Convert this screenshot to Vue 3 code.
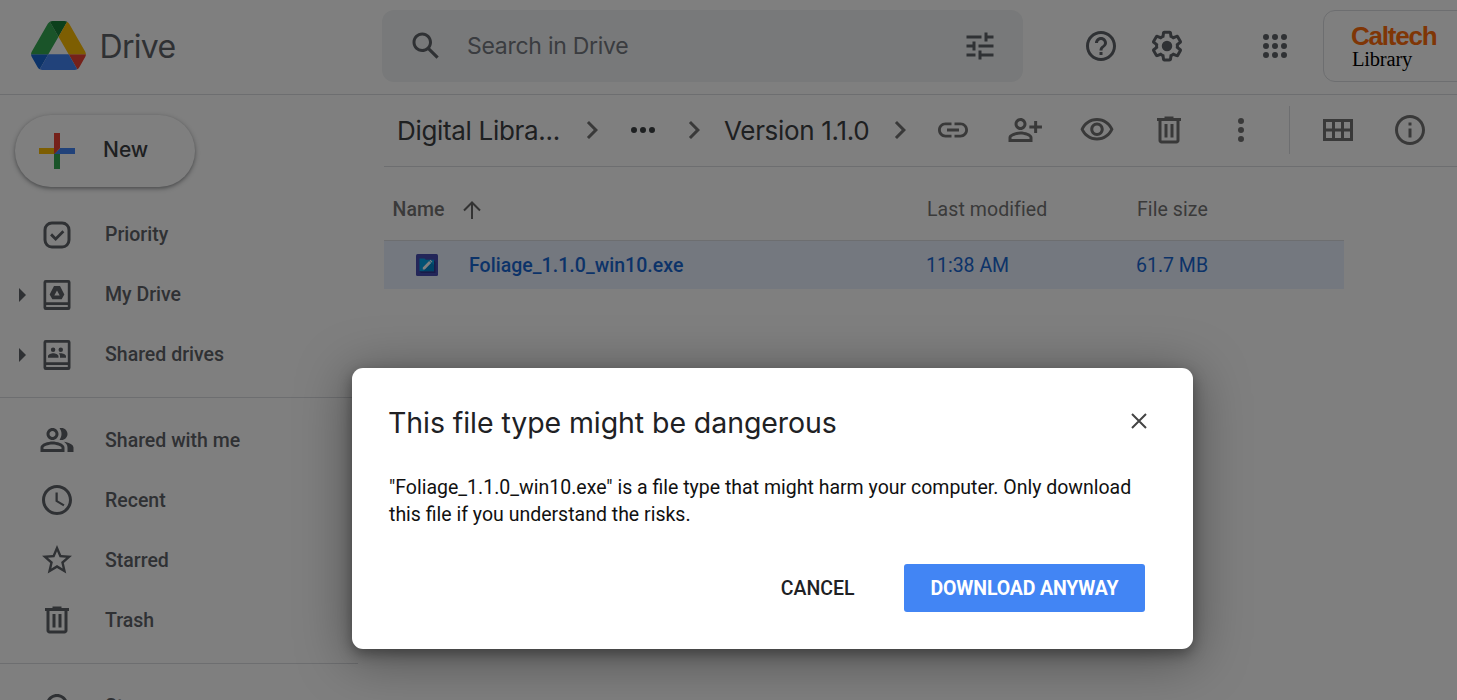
<script setup>
const paths = {
  search: 'M20.49 19l-5.73-5.73C15.53 12.2 16 10.91 16 9.5 16 5.91 13.09 3 9.5 3S3 5.91 3 9.5 5.91 16 9.5 16c1.41 0 2.7-.47 3.77-1.24L19 20.49 20.49 19zM5 9.5C5 7.01 7.01 5 9.5 5S14 7.01 14 9.5 11.99 14 9.5 14 5 11.99 5 9.5z',
  tune: 'M3 17v2h6v-2H3zM3 5v2h10V5H3zm10 16v-2h8v-2h-8v-2h-2v6h2zM7 9v2H3v2h4v2h2V9H7zm14 4v-2H11v2h10zm-6-4h2V7h4V5h-4V3h-2v6z',
  help: 'M11 18h2v-2h-2v2zm1-16C6.48 2 2 6.48 2 12s4.48 10 10 10 10-4.48 10-10S17.52 2 12 2zm0 18c-4.41 0-8-3.59-8-8s3.59-8 8-8 8 3.59 8 8-3.59 8-8 8zm0-14c-2.21 0-4 1.79-4 4h2c0-1.1.9-2 2-2s2 .9 2 2c0 2-3 1.75-3 5h2c0-2.25 3-2.5 3-5 0-2.21-1.79-4-4-4z',
  gear: 'M13.85 22.25h-3.7c-.74 0-1.36-.54-1.45-1.27l-.27-1.89c-.27-.14-.53-.29-.79-.46l-1.8.72c-.7.26-1.47-.03-1.81-.65L2.2 15.53c-.35-.66-.2-1.44.36-1.88l1.53-1.19c-.01-.15-.02-.3-.02-.46 0-.15.01-.31.02-.46l-1.52-1.19c-.59-.45-.74-1.26-.37-1.88l1.85-3.19c.34-.62 1.11-.9 1.79-.63l1.81.73c.26-.17.52-.32.78-.46l.27-1.91c.09-.7.71-1.25 1.44-1.25h3.7c.74 0 1.36.54 1.45 1.27l.27 1.89c.27.14.53.29.79.46l1.8-.72c.71-.26 1.48.03 1.82.65l1.84 3.18c.36.66.2 1.44-.36 1.88l-1.52 1.19c.01.15.02.3.02.46s-.01.31-.02.46l1.52 1.19c.56.45.72 1.23.37 1.86l-1.86 3.22c-.34.62-1.11.9-1.8.63l-1.8-.72c-.26.17-.52.32-.78.46l-.27 1.91c-.1.68-.72 1.22-1.46 1.22zm-3.23-2h2.76l.37-2.55.53-.22c.44-.18.88-.44 1.34-.78l.45-.34 2.38.96 1.38-2.4-2.03-1.58.07-.56c.03-.26.06-.51.06-.78s-.03-.53-.06-.78l-.07-.56 2.03-1.58-1.39-2.4-2.39.96-.45-.35c-.42-.32-.87-.58-1.33-.77l-.52-.22-.37-2.55h-2.76l-.37 2.55-.53.21c-.44.19-.88.44-1.34.79l-.45.33-2.38-.95-1.39 2.39 2.03 1.58-.07.56a7 7 0 0 0-.06.79c0 .26.02.53.06.78l.07.56-2.03 1.58 1.38 2.4 2.39-.96.45.35c.43.33.86.58 1.33.77l.53.22.38 2.55zM8.5 12a3.5 3.5 0 1 0 7 0 3.5 3.5 0 1 0-7 0z',
  apps: [6, 12, 18].flatMap((y) => [6, 12, 18].map((x) => `M${x - 2} ${y}a2 2 0 1 0 4 0a2 2 0 1 0-4 0z`)).join(''),
  chevron: 'M10 6L8.59 7.41 13.17 12l-4.58 4.59L10 18l6-6z',
  dots: 'M4 12a2 2 0 1 0 4 0a2 2 0 1 0-4 0zM10 12a2 2 0 1 0 4 0a2 2 0 1 0-4 0zM16 12a2 2 0 1 0 4 0a2 2 0 1 0-4 0z',
  link: 'M3.9 12c0-1.71 1.39-3.1 3.1-3.1h4V7H7c-2.76 0-5 2.24-5 5s2.24 5 5 5h4v-1.9H7c-1.71 0-3.1-1.39-3.1-3.1zM8 13h8v-2H8v2zm9-6h-4v1.9h4c1.71 0 3.1 1.39 3.1 3.1s-1.39 3.1-3.1 3.1h-4V17h4c2.76 0 5-2.24 5-5s-2.24-5-5-5z',
  personAdd: 'M13 8c0-2.21-1.79-4-4-4S5 5.79 5 8s1.79 4 4 4 4-1.79 4-4zm-2 0c0 1.1-.9 2-2 2s-2-.9-2-2 .9-2 2-2 2 .9 2 2zM1 17v3h16v-3c0-2.66-5.33-4-8-4s-8 1.34-8 4zm2 1v-1c.2-.71 3.3-2 6-2 2.69 0 5.78 1.28 6 2v1H3zM20.1 14v-3h3.2V9h-3.2V6h-2v3h-3.2v2h3.2v3h2z',
  eye: 'M12 6c3.79 0 7.17 2.13 8.82 5.5C19.17 14.87 15.79 17 12 17s-7.17-2.13-8.82-5.5C4.83 8.13 8.21 6 12 6m0-2C7 4 2.73 7.11 1 11.5 2.73 15.89 7 19 12 19s9.27-3.11 11-7.5C21.27 7.11 17 4 12 4zm0 5c1.38 0 2.5 1.12 2.5 2.5S13.38 14 12 14s-2.5-1.12-2.5-2.5S10.62 9 12 9m0-2c-2.48 0-4.5 2.02-4.5 4.5S9.52 16 12 16s4.5-2.02 4.5-4.5S14.48 7 12 7z',
  trash: 'M15 4V3H9v1H4v2h1v13c0 1.1.9 2 2 2h10c1.1 0 2-.9 2-2V6h1V4h-5zm2 15H7V6h10v13zM9 8h2v9H9zM13 8h2v9h-2z',
  more: 'M10 6a2 2 0 1 0 4 0a2 2 0 1 0-4 0zM10 12a2 2 0 1 0 4 0a2 2 0 1 0-4 0zM10 18a2 2 0 1 0 4 0a2 2 0 1 0-4 0z',
  grid: 'M2 4.67h20v14.66H2zM4 6.67V11h4V6.67zM10 6.67V11h4V6.67zM16 6.67V11h4V6.67zM4 13v4.33h4V13zM10 13v4.33h4V13zM16 13v4.33h4V13z',
  info: 'M11 7h2v2h-2zm0 4h2v6h-2zm1-9C6.48 2 2 6.48 2 12s4.48 10 10 10 10-4.48 10-10S17.52 2 12 2zm0 18c-4.41 0-8-3.59-8-8s3.59-8 8-8 8 3.59 8 8-3.59 8-8 8z',
  priority: 'M8.6 3h6.8A5.6 5.6 0 0 1 21 8.6v6.8a5.6 5.6 0 0 1-5.6 5.6H8.6A5.6 5.6 0 0 1 3 15.4V8.6A5.6 5.6 0 0 1 8.6 3zM8.6 5A3.6 3.6 0 0 0 5 8.6v6.8A3.6 3.6 0 0 0 8.6 19h6.8a3.6 3.6 0 0 0 3.6-3.6V8.6A3.6 3.6 0 0 0 15.4 5zM8.7 10.9l2.4 2.4 4.5-4.5 1.3 1.3-5.8 5.9-3.7-3.7z',
  myDrive: 'M4.5 2h15A1.5 1.5 0 0 1 21 3.5v17a1.5 1.5 0 0 1-1.5 1.5h-15A1.5 1.5 0 0 1 3 20.5v-17A1.5 1.5 0 0 1 4.500 2zM4.800 3.800v13h14.400v-13zM4.800 18.700v1.300h14.400v-1.300zM10 6h4l2.900 5.700-1.800 3.200H8.900L7.100 11.700zM12 9l-1.800 3.300h3.600z',
  sharedDrives: 'M4.5 2h15A1.5 1.5 0 0 1 21 3.5v17a1.5 1.5 0 0 1-1.5 1.5h-15A1.5 1.5 0 0 1 3 20.5v-17A1.5 1.5 0 0 1 4.500 2zM4.800 3.800v13h14.400v-13zM4.800 18.700v1.300h14.400v-1.300zM7.900 8.500a1.500 1.500 0 1 0 3 0a1.500 1.500 0 1 0-3 0zM13 8.500a1.500 1.500 0 1 0 3 0a1.500 1.500 0 1 0-3 0zM6 13.900v-1.100c0-1.300 2.200-2 3.500-2s3.500.7 3.500 2v1.100zM14 13.900v-1.200c0-.700-.3-1.200-.8-1.700.5-.1.900-.2 1.300-.2 1.300 0 3.500.7 3.500 2v1.100z',
  people: 'M16.67 13.13C18.04 14.06 19 15.32 19 17v3h4v-3c0-2.18-3.57-3.47-6.33-3.87zM15 12c2.21 0 4-1.79 4-4s-1.79-4-4-4c-.47 0-.91.1-1.33.24C14.5 5.27 15 6.58 15 8s-.5 2.73-1.33 3.76c.42.14.86.24 1.33.24zM9 12c2.21 0 4-1.79 4-4s-1.79-4-4-4-4 1.79-4 4 1.79 4 4 4zm0-6c1.1 0 2 .9 2 2s-.9 2-2 2-2-.9-2-2 .9-2 2-2zM9 13c-2.67 0-8 1.34-8 4v3h16v-3c0-2.66-5.33-4-8-4zm6 5H3v-.99C3.2 16.29 6.3 15 9 15s5.8 1.29 6 2v1z',
  clock: 'M11.99 2C6.47 2 2 6.48 2 12s4.47 10 9.99 10C17.52 22 22 17.52 22 12S17.52 2 11.99 2zM12 20c-4.42 0-8-3.58-8-8s3.58-8 8-8 8 3.58 8 8-3.58 8-8 8zm.5-13H11v6l5.25 3.15.75-1.23-4.5-2.67z',
  star: 'M22 9.24l-7.19-.62L12 2 9.19 8.63 2 9.24l5.46 4.73L5.82 21 12 17.27 18.18 21l-1.63-7.03L22 9.24zM12 15.4l-3.76 2.27 1-4.28-3.32-2.88 4.38-.38L12 6.1l1.71 4.04 4.38.38-3.32 2.88 1 4.28L12 15.4z',
  cloud: 'M19.35 10.04C18.67 6.59 15.64 4 12 4 9.11 4 6.6 5.64 5.35 8.04 2.34 8.36 0 10.91 0 14c0 3.31 2.69 6 6 6h13c2.76 0 5-2.24 5-5 0-2.64-2.05-4.78-4.65-4.96zM19 18H6c-2.21 0-4-1.79-4-4s1.79-4 4-4h.71C7.37 7.69 9.48 6 12 6c3.04 0 5.5 2.46 5.5 5.5v.5H19c1.66 0 3 1.34 3 3s-1.34 3-3 3z',
}

const navGroups = [
  [
    { label: 'Priority', icon: 'priority' },
    { label: 'My Drive', icon: 'myDrive', expandable: true },
    { label: 'Shared drives', icon: 'sharedDrives', expandable: true },
  ],
  [
    { label: 'Shared with me', icon: 'people' },
    { label: 'Recent', icon: 'clock' },
    { label: 'Starred', icon: 'star' },
    { label: 'Trash', icon: 'trash' },
  ],
  [{ label: 'Storage', icon: 'cloud' }],
]

const actions = ['link', 'personAdd', 'eye', 'trash', 'more']
</script>

<template>
  <div class="app">
    <header class="header">
      <div class="brand">
        <svg class="logo" viewBox="0 0 87.3 78">
          <path fill="#1967d2" d="m6.6 66.85 3.85 6.65c.8 1.4 1.95 2.5 3.3 3.3l13.75-23.8h-27.5c0 1.55.4 3.1 1.2 4.5z" />
          <path fill="#34a853" d="m43.65 25-13.75-23.8c-1.35.8-2.5 1.9-3.3 3.3l-25.4 44a9.06 9.06 0 0 0-1.2 4.5h27.5z" />
          <path fill="#ea4335" d="m73.55 76.8c1.35-.8 2.5-1.9 3.3-3.3l1.6-2.75 7.65-13.25c.8-1.4 1.2-2.95 1.2-4.5h-27.5z" />
          <path fill="#188038" d="m43.65 25 13.75-23.8c-1.35-.8-2.9-1.2-4.5-1.2h-18.5c-1.6 0-3.15.45-4.5 1.2z" />
          <path fill="#4285f4" d="m59.8 53h-32.3l-13.75 23.8c1.35.8 2.9 1.2 4.5 1.2h50.8c1.6 0 3.15-.45 4.5-1.2z" />
          <path fill="#fbbc04" d="m73.4 26.5-12.7-22c-.8-1.4-1.95-2.5-3.3-3.3l-13.75 23.8 16.15 28h27.45c0-1.55-.4-3.1-1.2-4.5z" />
        </svg>
        <span class="brand-name">Drive</span>
      </div>
      <div class="search">
        <svg class="icon" viewBox="0 0 24 24"><path :d="paths.search" /></svg>
        <span class="search-text">Search in Drive</span>
        <svg class="icon" viewBox="0 0 24 24"><path :d="paths.tune" /></svg>
      </div>
      <div class="header-icons">
        <svg class="icon" viewBox="0 0 24 24"><path :d="paths.help" /></svg>
        <svg class="icon" viewBox="0 0 24 24"><path fill-rule="evenodd" :d="paths.gear" /></svg>
        <svg class="icon apps" viewBox="0 0 24 24"><path :d="paths.apps" /></svg>
      </div>
      <div class="account">
        <span class="org">Caltech</span>
        <span class="org-unit">Library</span>
      </div>
    </header>

    <div class="body">
      <aside class="sidebar">
        <button class="new">
          <svg class="plus" viewBox="0 0 36 36">
            <path fill="#34a853" d="M16 16v14h4V20z" />
            <path fill="#4285f4" d="M30 16H20l-4 4h14z" />
            <path fill="#fbbc04" d="M6 16v4h10l4-4z" />
            <path fill="#ea4335" d="M20 16V6h-4v14z" />
          </svg>
          <span class="new-label">New</span>
        </button>
        <nav v-for="(group, i) in navGroups" :key="i" class="nav-group">
          <a v-for="item in group" :key="item.label" class="nav-item">
            <span class="expander" :class="{ shown: item.expandable }"></span>
            <svg class="icon" viewBox="0 0 24 24"><path fill-rule="evenodd" :d="paths[item.icon]" /></svg>
            <span class="nav-label">{{ item.label }}</span>
          </a>
        </nav>
      </aside>

      <main class="main">
        <div class="toolbar">
          <span class="crumb crumb-root">Digital Libra...</span>
          <svg class="icon muted" viewBox="0 0 24 24"><path :d="paths.chevron" /></svg>
          <svg class="icon crumb-dots" viewBox="0 0 24 24"><path :d="paths.dots" /></svg>
          <svg class="icon muted" viewBox="0 0 24 24"><path :d="paths.chevron" /></svg>
          <span class="crumb crumb-leaf">Version 1.1.0</span>
          <svg class="icon muted" viewBox="0 0 24 24"><path :d="paths.chevron" /></svg>
          <div class="actions">
            <svg v-for="name in actions" :key="name" class="icon muted" viewBox="0 0 24 24">
              <path fill-rule="evenodd" :d="paths[name]" />
            </svg>
          </div>
          <div class="view-actions">
            <svg class="icon muted" viewBox="0 0 24 24"><path fill-rule="evenodd" :d="paths.grid" /></svg>
            <svg class="icon muted" viewBox="0 0 24 24"><path :d="paths.info" /></svg>
          </div>
        </div>

        <div class="table">
          <div class="row head">
            <div class="cell-name">
              <span class="name-label">Name</span>
              <svg class="sort" viewBox="0 0 18 18"><path d="M9 18V2M1 9.500l8-8 8 8" /></svg>
            </div>
            <span class="cell-date">Last modified</span>
            <span class="cell-size">File size</span>
          </div>
          <div class="row file">
            <div class="cell-name">
              <svg class="file-icon" viewBox="0 0 22 22">
                <rect width="22" height="22" rx="1.500" fill="#464db3" />
                <path fill="#262b78" d="M18 6.500l1.500 1.500v11H5l-1.500-1.500z" opacity=".6" />
                <path fill="#03a4e8" d="M3.500 4.500h5l1.300 1.300H18v11.500H3.500z" />
                <path fill="#0277bd" d="M7.500 16l8-7.500 2.500 2.500v6H8.500z" opacity=".7" />
                <path fill="#fff" d="M6.800 13.400l6.300-6.300 2 2-6.300 6.300H6.800zM13.600 6.600l.8-.8 2 2-.8.8z" />
              </svg>
              <span class="file-name">Foliage_1.1.0_win10.exe</span>
            </div>
            <span class="cell-date">11:38 AM</span>
            <span class="cell-size">61.7 MB</span>
          </div>
        </div>
      </main>
    </div>

    <div class="scrim">
      <section class="dialog" role="dialog">
        <div class="dialog-head">
          <h2 class="dialog-title">This file type might be dangerous</h2>
          <svg class="close" viewBox="0 0 16 16"><path d="M1 1l14 14M15 1L1 15" /></svg>
        </div>
        <p class="dialog-text">"Foliage_1.1.0_win10.exe" is a file type that might harm your computer. Only download<br />this file if you understand the risks.</p>
        <div class="dialog-actions">
          <button class="cancel">CANCEL</button>
          <button class="confirm">DOWNLOAD ANYWAY</button>
        </div>
      </section>
    </div>
  </div>
</template>

<style>
body {
  margin: 0;
  overflow: hidden;
}
</style>

<style scoped>
.app {
  position: relative;
  width: 1457px;
  height: 700px;
  overflow: hidden;
  background: #fff;
  font-family: Roboto, "Liberation Sans", sans-serif;
  font-size: 19.5px;
  color: #5f6368;
}
.app * {
  box-sizing: border-box;
  white-space: nowrap;
}
button {
  border: 0;
  padding: 0;
  font: inherit;
}
.icon {
  flex: none;
  width: 36px;
  height: 36px;
  fill: #5f6368;
}
.icon.muted {
  fill: #737373;
}
.brand-name,
.search-text,
.crumb,
.new,
.dialog-title {
  font-family: Inter, Roboto, sans-serif;
}

/* Header */
.header {
  display: flex;
  height: 95px;
  padding-top: 10px;
  border-bottom: 1px solid #dadce0;
}
.brand {
  flex: none;
  display: flex;
  align-items: center;
  width: 351.5px;
  height: 72px;
  margin-left: 30.5px;
}
.logo {
  width: 55px;
  height: 49px;
  margin-bottom: 1px;
}
.brand-name {
  margin-left: 14px;
  padding-top: 1px;
  font-size: 32px;
  letter-spacing: -0.7px;
}
.search {
  flex: none;
  display: flex;
  align-items: center;
  width: 641px;
  height: 72px;
  padding: 0 25px 0 26px;
  border-radius: 12px;
  background: #f1f3f4;
}
.search-text {
  flex: 1;
  margin-left: 23px;
  font-size: 23px;
  letter-spacing: -0.27px;
  color: #757980;
}
.header-icons {
  flex: none;
  display: flex;
  align-items: center;
  height: 72px;
  margin-left: 60px;
  gap: 30px;
}
.apps {
  margin-left: 42px;
}
.account {
  flex: none;
  display: flex;
  flex-direction: column;
  width: 180px;
  height: 72px;
  margin-left: 30px;
  padding: 12px 0 0 27px;
  border: 1px solid #dadce0;
  border-radius: 12px;
}
.org {
  font: bold 26px/26px "Liberation Sans", Arial, sans-serif;
  letter-spacing: -1.2px;
  color: #ff6c0c;
}
.org-unit {
  padding-left: 1px;
  font: 20.5px/20px "Liberation Serif", serif;
  letter-spacing: -0.2px;
  color: #000;
}

/* Sidebar */
.body {
  display: flex;
  height: 605px;
}
.sidebar {
  flex: none;
  width: 384px;
  padding-top: 20px;
}
.new {
  display: flex;
  align-items: center;
  width: 180px;
  height: 72px;
  margin: 0 0 18px 15px;
  padding-left: 15px;
  border-radius: 36px;
  background: #fff;
  box-shadow: 0 1.5px 3px rgba(60, 64, 67, 0.3), 0 1.5px 5px 1px rgba(60, 64, 67, 0.25);
  color: #3c4043;
  font-size: 21px;
  font-weight: 500;
}
.new-label {
  padding-bottom: 3px;
}
.plus {
  width: 54px;
  height: 54px;
  margin-right: 19px;
}
.nav-group {
  width: 358px;
}
.nav-group + .nav-group {
  margin-top: 12px;
  padding-top: 12px;
  border-top: 1px solid #dadce0;
}
.nav-group:last-child {
  margin-top: 13px;
}
.nav-item {
  display: flex;
  align-items: center;
  height: 60px;
  padding-left: 19px;
}
.expander {
  width: 20px;
}
.expander.shown::before {
  content: "";
  display: block;
  width: 0;
  border-left: 7.5px solid #5f6368;
  border-top: 7px solid transparent;
  border-bottom: 7px solid transparent;
}
.nav-label {
  margin-left: 30px;
  font-weight: 500;
}
.nav-group:first-of-type .nav-label {
  padding-bottom: 2px;
}

/* Toolbar */
.main {
  flex: none;
  width: 1073px;
}
.toolbar {
  display: flex;
  align-items: center;
  height: 72px;
  padding: 0 0 1px 13px;
  border-bottom: 1px solid #dadce0;
}
.crumb {
  flex: none;
  font-size: 26px;
  letter-spacing: -0.32px;
  color: #3c4043;
}
.crumb-root {
  width: 177px;
}
.crumb-dots {
  margin: 0 15px;
  fill: #3c4043;
}
.crumb-leaf {
  width: 170px;
  padding-left: 12px;
}
.actions {
  display: flex;
  gap: 36px;
  margin-left: 17px;
}
.view-actions {
  display: flex;
  align-items: center;
  gap: 36px;
  height: 48px;
  margin-left: 30px;
  padding-left: 30px;
  border-left: 1px solid #dadce0;
}

/* File list */
.table {
  width: 960px;
}
.row {
  display: grid;
  grid-template-columns: 542px 210px 1fr;
  align-items: center;
}
.head {
  height: 73px;
  padding-top: 12px;
  color: #757575;
  letter-spacing: 0.08px;
}
.cell-name {
  display: flex;
  align-items: center;
}
.head .cell-name {
  padding-left: 8.5px;
}
.head .cell-date,
.head .cell-size {
  padding-left: 1px;
}
.name-label {
  font-weight: 500;
}
.sort {
  width: 18px;
  height: 18px;
  margin-left: 18px;
  fill: none;
  stroke: #666;
  stroke-width: 2;
}
.file {
  height: 49px;
  border-top: 1px solid #dadce0;
  background: #e8f0fe;
  color: #1967d2;
}
.file-icon {
  width: 22px;
  height: 22px;
  margin: 0 31px 0 32px;
}
.file-name {
  font-weight: 500;
  letter-spacing: 0.04px;
}

/* Dialog */
.scrim {
  position: absolute;
  inset: 0;
  background: rgba(0, 0, 0, 0.5);
}
.dialog {
  position: absolute;
  left: 352px;
  top: 368px;
  width: 841px;
  height: 281px;
  padding: 33px 48px 37px 37px;
  border-radius: 11px;
  background: #fff;
  box-shadow: 0 5px 14px rgba(0, 0, 0, 0.35), 0 8px 52px 4px rgba(0, 0, 0, 0.35);
}
.dialog-head {
  display: flex;
  justify-content: space-between;
  align-items: center;
  height: 42px;
}
.dialog-title {
  margin: 0 0 0 -1px;
  font-size: 28.5px;
  font-weight: 400;
  letter-spacing: -0.08px;
  color: #202124;
}
.close {
  width: 16px;
  height: 16px;
  margin: -3px -1.5px 0 0;
  fill: none;
  stroke: #444;
  stroke-width: 2;
}
.dialog-text {
  margin: 31px 0 0;
  line-height: 27px;
  color: #111;
}
.dialog-actions {
  display: flex;
  justify-content: flex-end;
  margin-top: 36px;
}
.dialog-actions button {
  height: 48px;
  font-weight: 500;
}
.cancel {
  margin-right: 49.5px;
  background: none;
  color: #202124;
}
.dialog-actions .confirm {
  width: 241px;
  border-radius: 3px;
  background: #4285f4;
  color: #fff;
  font-weight: 700;
  letter-spacing: -0.15px;
}
</style>
